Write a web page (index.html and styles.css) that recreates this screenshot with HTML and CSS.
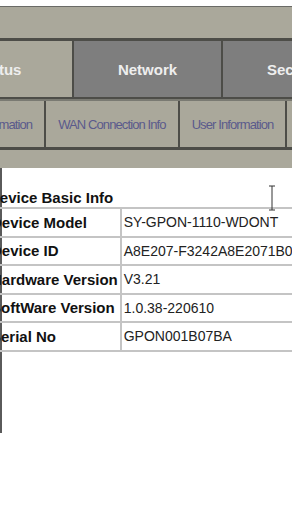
FILE: index.html
```html
<!DOCTYPE html>
<html lang="en">
  <head>
    <meta charset="UTF-8" />
    <meta name="viewport" content="width=device-width, initial-scale=1.0" />
    <title>Device Information</title>
    <link rel="stylesheet" href="styles.css">
  </head>
  <body>
    <div class="top-strip"></div>
    <div class="band"></div>

    <!-- main menu -->
    <nav class="menu">
      <a class="menu-item">Status</a>
      <a class="menu-item active">Network</a>
      <a class="menu-item active">Security</a>
    </nav>

    <!-- sub menu -->
    <nav class="submenu">
      <a class="sub-item">Device Information</a>
      <a class="sub-item">WAN Connection Info</a>
      <a class="sub-item">User Information</a>
      <a class="sub-item">Optical</a>
    </nav>
    <div class="band band-low"></div>

    <div class="content">
      <div class="inner">
        <h3 class="title">Device Basic Info</h3>
        <table class="info">
          <tr>
            <td class="label">Device Model</td>
            <td>SY-GPON-1110-WDONT</td>
          </tr>
          <tr>
            <td class="label">Device ID</td>
            <td>A8E207-F3242A8E2071B0</td>
          </tr>
          <tr>
            <td class="label">Hardware Version</td>
            <td>V3.21</td>
          </tr>
          <tr>
            <td class="label">SoftWare Version</td>
            <td>1.0.38-220610</td>
          </tr>
          <tr>
            <td class="label">Serial No</td>
            <td>GPON001B07BA</td>
          </tr>
        </table>
      </div>
      <!-- text cursor from the screenshot -->
      <svg class="cursor" width="8" height="26" viewBox="0 0 8 26">
        <path d="M1 1h6M4 1v24M1 25h6" stroke="#333" stroke-width="1" fill="none" />
      </svg>
    </div>
  </body>
</html>
```

FILE: styles.css
```css
/* CSS styles */
body {
  font-family: "Liberation Sans", Arial, sans-serif;
  margin: 0;
  padding: 0;
  width: 292px;
  overflow: hidden;
  background-color: #fff;
}

.top-strip {
  height: 6px;
  background-color: #fff;
  border-bottom: 1px solid #6a6a66;
}

.band {
  height: 31px;
  background-color: #aaa89b;
  border-bottom: 3px solid #4d4d48;
}

.band-low {
  height: 18px;
  border-bottom: none;
}

.menu {
  display: flex;
  margin-left: -75px;
  height: 56px;
  border-bottom: 2px solid #4d4d48;
}

.menu-item {
  flex: none;
  width: 147px;
  display: flex;
  align-items: center;
  justify-content: center;
  background-color: #aaa89b;
  border-right: 2px solid #4d4d48;
  color: #eeeeee;
  font-size: 15px;
  font-weight: bold;
}

.menu-item.active {
  background-color: #7e7e7e;
}

.submenu {
  display: flex;
  margin-left: -72px;
  height: 46px;
  background-color: #aaa89b;
  border-top: 2px solid #7a7a72;
  border-bottom: 3px solid #4d4d48;
}

.sub-item {
  flex: none;
  display: flex;
  align-items: center;
  padding: 0 12px;
  border-right: 2px solid #4d4d48;
  color: #5a5a8c;
  font-size: 13px;
  letter-spacing: -0.9px;
}

.content {
  position: relative;
  height: 265px;
  border-left: 2px solid #5a5a5a;
}

.inner {
  margin-left: -13px;
  overflow: hidden;
}

.title {
  margin: 0;
  padding-top: 21px;
  height: 18px;
  line-height: 18px;
  font-size: 15px;
  font-weight: bold;
  color: #111;
}

.info {
  border-collapse: collapse;
  width: 340px;
  font-size: 14px;
  color: #222;
}

.info td {
  height: 26.5px;
  padding: 0 2px;
  border-top: 2px solid #c4c4c4;
  border-bottom: 2px solid #c4c4c4;
  white-space: nowrap;
}

.info td.label {
  width: 126px;
  font-size: 15px;
  font-weight: bold;
  color: #111;
  border-right: 2px solid #c4c4c4;
}

.cursor {
  position: absolute;
  left: 266px;
  top: 17px;
}
```
